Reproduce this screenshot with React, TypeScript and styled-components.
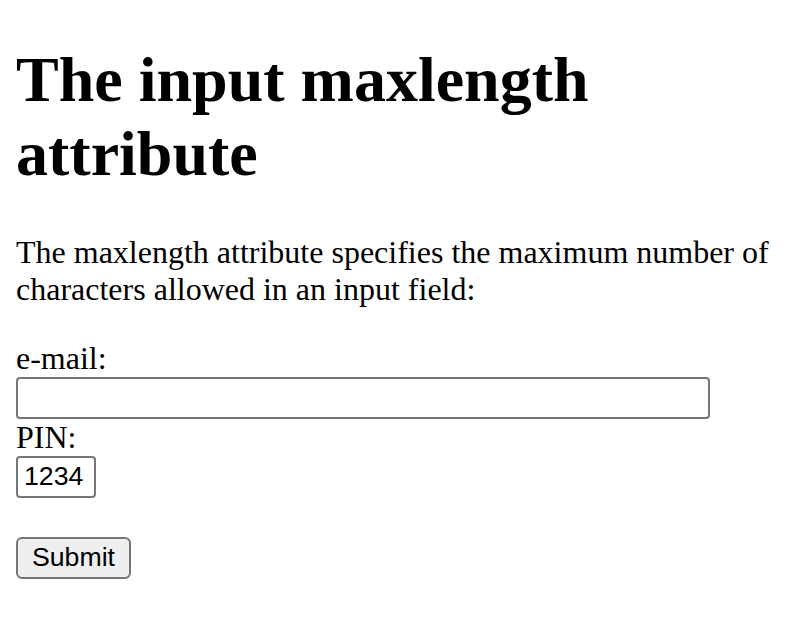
import React from "react";
import styled, { createGlobalStyle } from "styled-components";

const GlobalStyle = createGlobalStyle`
  html, body { background: #ffffff; }
  body {
    margin: 0 16px 16px 16px;
    font-family: "Liberation Serif", "Times New Roman", serif;
    font-size: 32px;
    color: #000000;
  }
`;

const Heading = styled.h1`
  font-size: 64px;
  font-weight: bold;
  margin: 42.88px 0;
  line-height: normal;
`;

const Paragraph = styled.p`
  margin: 32px 0;
`;

const Form = styled.form`
  margin: 0;
`;

const Label = styled.label`
  font-size: 32px;
`;

const TextInput = styled.input<{ $w: number }>`
  box-sizing: border-box;
  width: ${(p) => p.$w}px;
  height: 42px;
  padding: 2px 6px;
  border: 2px solid #767676;
  border-radius: 4px;
  background: #ffffff;
  font-family: "Liberation Sans", Arial, sans-serif;
  font-size: 26.67px;
  color: #000000;
  margin: 0;
  vertical-align: baseline;
`;

const SubmitButton = styled.input`
  box-sizing: border-box;
  width: 115px;
  height: 42px;
  padding: 2px 12px;
  border: 2px solid #767676;
  border-radius: 6px;
  background: #efefef;
  font-family: "Liberation Sans", Arial, sans-serif;
  font-size: 26.67px;
  color: #000000;
  margin: 2px 0 0 0;
`;

export default function App() {
  return (
    <>
      <GlobalStyle />
      <Heading>The input maxlength attribute</Heading>
      <Paragraph>
        The maxlength attribute specifies the maximum number of characters
        allowed in an input field:
      </Paragraph>
      <Form onSubmit={(e) => e.preventDefault()}>
        <Label htmlFor="email">e-mail:</Label>
        <br />
        <TextInput type="text" id="email" name="email" $w={694} />
        <br />
        <Label htmlFor="pin">PIN:</Label>
        <br />
        <TextInput
          type="text"
          id="pin"
          name="pin"
          maxLength={4}
          defaultValue="1234"
          $w={80}
        />
        <br />
        <br />
        <SubmitButton type="submit" value="Submit" />
      </Form>
    </>
  );
}
